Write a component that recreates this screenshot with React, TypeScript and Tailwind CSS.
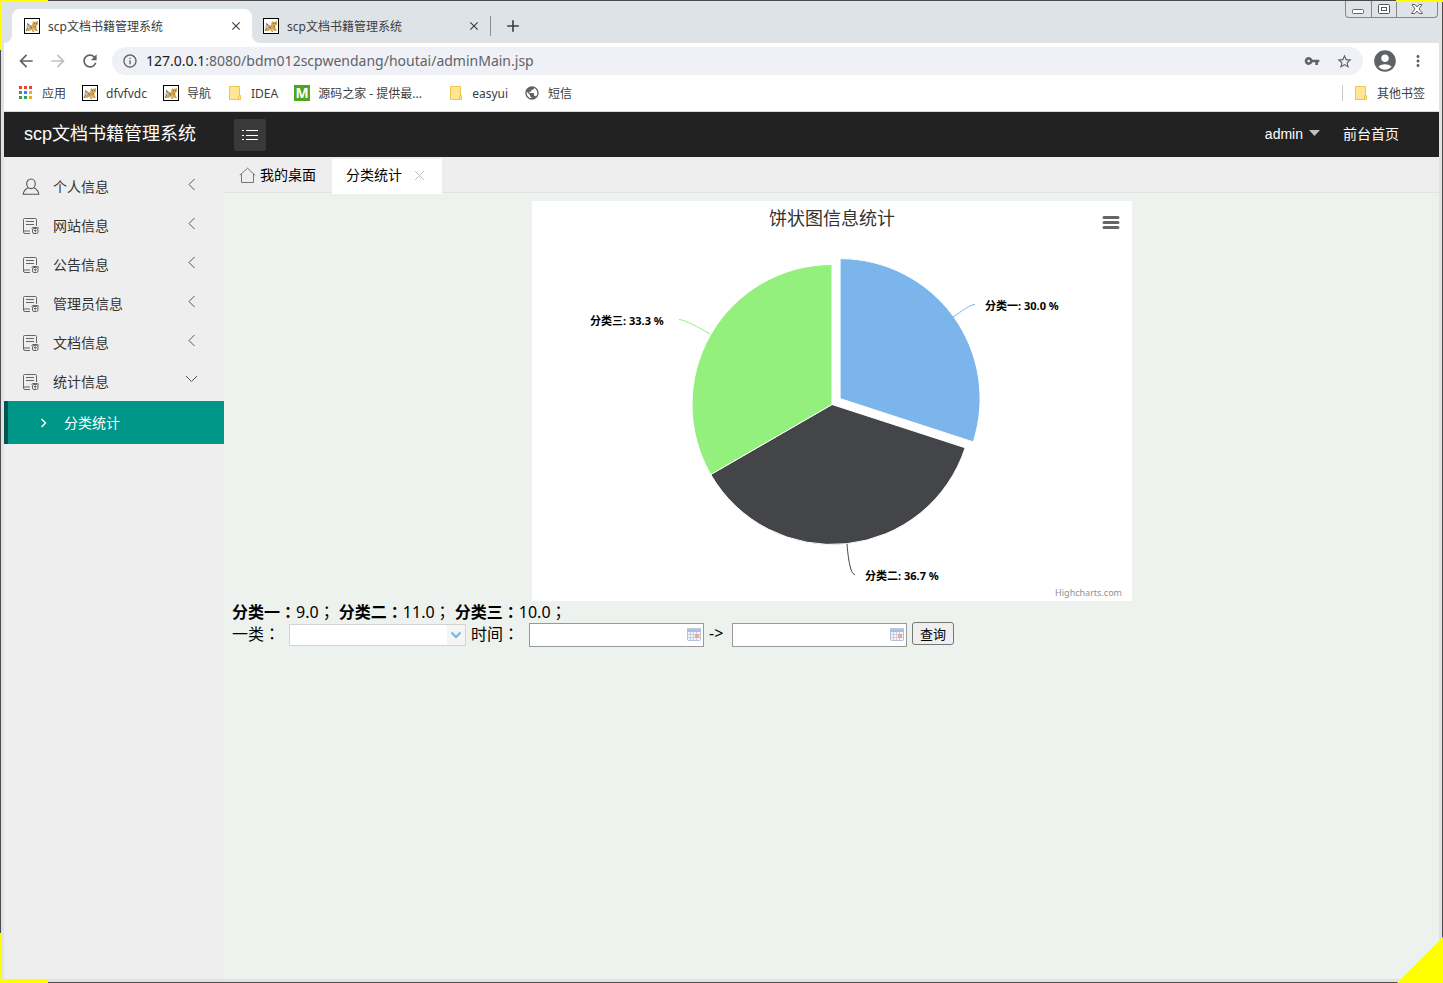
import React, { useState } from "react";
import {
  MdAccountCircle,
  MdAdd,
  MdArrowBack,
  MdArrowForward,
  MdClose,
  MdInfoOutline,
  MdMoreVert,
  MdPublic,
  MdRefresh,
  MdStarBorder,
  MdVpnKey,
} from "react-icons/md";

const menu = ["个人信息", "网站信息", "公告信息", "管理员信息", "文档信息", "统计信息"];

const slices = [
  { name: "分类一", value: 9, color: "#7cb5ec", offset: 10 },
  { name: "分类二", value: 11, color: "#434549", offset: 0 },
  { name: "分类三", value: 10, color: "#94f07c", offset: 0 },
];

const CatIcon = () => (
  <svg width="16" height="16" viewBox="0 0 16 16" className="shrink-0">
    <rect x="0.5" y="0.5" width="15" height="15" fill="#fff" stroke="#000" />
    <path d="M3 5.5 L6 7 L8 7.5 L7 9 L4 9.5 L3 12 L2 13 Z" fill="#b9b4ac" />
    <path d="M5 9 L8 7 L9 3 L10.5 4 L12.5 3.5 L14 3 L14 6.5 L12 8.5 L13 11 L14 13 L11 13 L9.5 11.5 L7 12 L5.5 13 L3 13 Z" fill="#d5a850" />
    <path d="M2 13 L4 10 M3 5.5 L5.5 7 M6 8.5 L8 10 M10.5 8.5 L12 9 M8 12.5 L10 13.5" stroke="#6b6252" strokeWidth="1" fill="none" />
    <path d="M10 5.5 H11 M12 5.5 H13" stroke="#8a6a2c" />
  </svg>
);

const AppsIcon = () => (
  <svg width="16" height="16" viewBox="0 0 16 16" className="shrink-0">
    <path d="M1 1h3v3h-3z M6 1h3v3h-3z M11 1h3v3h-3z" fill="#ea4335" />
    <path d="M1 6h3v3h-3z M1 11h3v3h-3z M6 11h3v3h-3z" fill="#34a05a" />
    <path d="M6 6h3v3h-3z" fill="#2a85f0" />
    <path d="M11 6h3v3h-3z M11 11h3v3h-3z" fill="#f9ab00" />
  </svg>
);

const FolderIcon = () => (
  <svg width="16" height="16" viewBox="0 0 16 16" className="shrink-0">
    <path d="M2.5 1.5 H12.5 V10.5 H13.5 V14.5 H2.5 Z" fill="#ffe694" stroke="#efc44f" />
    <path d="M11.5 14 V11 L13 10.5" fill="none" stroke="#efc44f" />
  </svg>
);

const LetterIcon = () => (
  <span className="w-4 h-4 shrink-0 bg-[#4ea61e] text-white text-[14px] leading-4 font-bold text-center">M</span>
);

const UserIcon = () => (
  <svg width="18" height="18" viewBox="0 0 18 18" fill="none" stroke="#555" strokeWidth="1.1">
    <ellipse cx="9" cy="5.8" rx="4.3" ry="4.8" />
    <path d="M6.3 9.8 C3.5 11 1.6 13 1.2 16.3 H16.8 C16.4 13 14.5 11 11.7 9.8" />
  </svg>
);

const DocIcon = () => (
  <svg width="18" height="18" viewBox="0 0 18 18" fill="none" stroke="#666" strokeWidth="1">
    <path d="M8 16.5 H3 Q1.5 16.5 1.5 15 V2.5 Q1.5 1.5 2.5 1.5 H13.5 Q14.5 1.5 14.5 2.5 V9" />
    <path d="M4 4.5 H12 M4 7.5 H12 M2 14 H8" />
    <rect x="10.5" y="11.5" width="5.5" height="5" rx="1.5" />
    <path d="M9.5 11.5 L11 10.5 H15.5 L17 11.5 M13.3 12.5 V15.5 M12 13.5 H14.6" />
  </svg>
);

const HomeIcon = () => (
  <svg width="17" height="17" viewBox="0 0 17 17" fill="none" stroke="#777" strokeWidth="1">
    <path d="M0.8 8.3 L8.5 1.2 L16.2 8.3 M2.5 7 V15.5 H14.5 V7" />
  </svg>
);

const CalendarIcon = () => (
  <svg width="14" height="13" viewBox="0 0 14 13">
    <rect x="0.5" y="1.5" width="13" height="11" rx="1" fill="#f1f5fc" stroke="#b4c1da" />
    <path d="M0 2 Q0 0 1 0 H13 Q14 0 14 2 V4 H0 Z" fill="#a3bdf0" />
    <path d="M0 1 Q0 0 1 0 H13 Q14 0 14 1 V1.5 H0 Z" fill="#c9c9cc" />
    <path d="M3.5 4 V12 M6.5 4 V12 M9.5 4 V12 M1 6.5 H13 M1 9.5 H13" stroke="#c4d0e4" strokeWidth="1" />
    <rect x="8" y="6" width="4" height="4" fill="#f3a58f" />
  </svg>
);

// full-width punctuation set in the middle of its square
const Mark = ({ children }: { children: string }) => (
  <span className="font-['Noto_Sans_CJK_TC',sans-serif]">{children}</span>
);

const BrowserTab = ({ active }: { active?: boolean }) => (
  <div
    className={`relative flex items-center h-[34px] pr-2 text-[12px] text-[#3c4043] ${
      active ? "w-[240px] pl-3 bg-white rounded-t-lg" : "w-[238px] pl-[11px]"
    }`}
  >
    {active && (
      <>
        <svg className="absolute -left-2 bottom-0" width="8" height="8">
          <path d="M8 0 V8 H0 A8 8 0 0 0 8 0" fill="#fff" />
        </svg>
        <svg className="absolute -right-2 bottom-0" width="8" height="8">
          <path d="M0 0 V8 H8 A8 8 0 0 1 0 0" fill="#fff" />
        </svg>
      </>
    )}
    <CatIcon />
    <span className="ml-2 flex-1 pt-[2px]">scp文档书籍管理系统</span>
    <button aria-label="关闭标签页" className="w-4 h-4 flex items-center justify-center">
      <MdClose size={14} />
    </button>
  </div>
);

const Bookmark = ({ icon, children }: { icon: React.ReactNode; children: string }) => (
  <a href="#" className="flex items-center gap-2 whitespace-nowrap">
    {icon}
    <span className="pt-[2px]">{children}</span>
  </a>
);

const Browser = () => (
  <div className="font-['Noto_Sans','Noto_Sans_CJK_SC',sans-serif]">
    {/* TAB STRIP */}
    <div className="flex h-[42px] items-end pl-2 pr-px">
      <BrowserTab active />
      <BrowserTab />
      <div className="h-[34px] flex items-center">
        <span className="w-px h-5 bg-[#8a8d91]"></span>
        <button aria-label="新标签页" className="ml-3 text-[#3c4043]">
          <MdAdd size={20} />
        </button>
      </div>
      <div className="ml-auto self-start flex h-[17px] border border-t-0 border-[#84878c] rounded-b-[4px]">
        <button aria-label="最小化" className="w-[25px] flex items-center justify-center">
          <svg width="13" height="11" fill="#fff" stroke="#666">
            <rect x="0.5" y="5.5" width="11" height="4" rx="1" />
          </svg>
        </button>
        <button aria-label="最大化" className="w-[26px] flex items-center justify-center border-x border-[#84878c]">
          <svg width="13" height="11" fill="#fff" stroke="#555">
            <rect x="0.5" y="0.5" width="11" height="9" rx="1" />
            <rect x="3.5" y="3.5" width="5" height="3" />
          </svg>
        </button>
        <button aria-label="关闭" className="w-[40px] flex items-center justify-center">
          <svg width="13" height="11" fill="#fff" stroke="#666">
            <path d="M1 0.5 H4 L6 3 L8 0.5 H11 L8 5 L11.5 9.5 H8 L6 7 L4 9.5 H0.5 L4 5 Z" />
          </svg>
        </button>
      </div>
    </div>

    {/* ADDRESS BAR */}
    <div className="flex items-center h-9 bg-white px-3 text-[#5f6368]">
      <button aria-label="后退" className="w-5"><MdArrowBack size={20} /></button>
      <button aria-label="前进" className="w-5 ml-3 text-[#bdc1c6]"><MdArrowForward size={20} /></button>
      <button aria-label="刷新" className="w-5 ml-3"><MdRefresh size={20} /></button>
      <div className="flex flex-1 items-center h-7 ml-3 pl-[10px] pr-[10px] rounded-full bg-[#eff1f6]">
        <MdInfoOutline size={16} className="shrink-0" />
        <a href="#" className="ml-2 flex-1 text-[14px] leading-7">
          <span className="text-[#202124]">127.0.0.1</span>
          :8080/bdm012scpwendang/houtai/adminMain.jsp
        </a>
        <button aria-label="密码"><MdVpnKey size={16} /></button>
        <button aria-label="收藏" className="ml-4"><MdStarBorder size={17} /></button>
      </div>
      <button aria-label="用户" className="ml-[9px]"><MdAccountCircle size={26} /></button>
      <button aria-label="菜单" className="ml-[11px]"><MdMoreVert size={18} /></button>
    </div>

    {/* BOOKMARKS */}
    <div className="flex items-center gap-4 h-[33px] pb-1 bg-white border-b border-[#d8dbdf] px-[14px] text-[12px] text-[#3c4043]">
      <Bookmark icon={<AppsIcon />}>应用</Bookmark>
      <Bookmark icon={<CatIcon />}>dfvfvdc</Bookmark>
      <Bookmark icon={<CatIcon />}>导航</Bookmark>
      <Bookmark icon={<FolderIcon />}>IDEA</Bookmark>
      <div className="w-[138px]">
        <Bookmark icon={<LetterIcon />}>源码之家 - 提供最...</Bookmark>
      </div>
      <Bookmark icon={<FolderIcon />}>easyui</Bookmark>
      <Bookmark icon={<MdPublic size={16} className="text-[#5f6368]" />}>短信</Bookmark>
      <div className="ml-auto flex items-center gap-[10px]">
        <span className="w-px h-4 bg-[#c8cacd]"></span>
        <Bookmark icon={<FolderIcon />}>其他书签</Bookmark>
      </div>
    </div>
  </div>
);

const Sidebar = () => {
  const [open, setOpen] = useState("统计信息");

  return (
    <nav className="w-[220px] shrink-0 pt-[10px] bg-[#eee] text-[14px] text-[#333]">
      {menu.map((item) => (
        <div key={item}>
          <button
            onClick={() => setOpen(open === item ? "" : item)}
            className="flex items-center w-full h-[39px] pl-[18px] pr-[26px] text-left"
          >
            {item === "个人信息" ? <UserIcon /> : <DocIcon />}
            <span className="ml-[13px] pt-[2px] flex-1">{item}</span>
            <svg width="13" height="18" fill="none" stroke="#555" strokeWidth="1">
              {open === item ? <path d="M1 3 L6.5 8.5 L12 3" /> : <path d="M9.5 1 L4 6.5 L9.5 12" />}
            </svg>
          </button>
          {open === item && item === "统计信息" && (
            <a
              href="#"
              className="flex items-center h-[43px] pl-7 bg-[#009688] border-l-4 border-[#00564e] text-white"
            >
              <svg width="16" height="16" fill="none" stroke="#fff" strokeWidth="1.4">
                <path d="M5.5 4 L9.5 8 L5.5 12" />
              </svg>
              <span className="ml-3 pt-[2px]">分类统计</span>
            </a>
          )}
        </div>
      ))}
    </nav>
  );
};

const point = (cx: number, cy: number, angle: number) =>
  `${cx + 140 * Math.sin(angle)} ${cy - 140 * Math.cos(angle)}`;

const PieChart = () => {
  const total = slices.reduce((sum, s) => sum + s.value, 0);
  let angle = 0;

  const paths = slices.map((s) => {
    const from = angle;
    const to = from + (s.value / total) * Math.PI * 2;
    const mid = (from + to) / 2;
    const cx = 300 + s.offset * Math.sin(mid);
    const cy = 203.5 - s.offset * Math.cos(mid);
    angle = to;
    return (
      <path
        key={s.name}
        d={`M${cx} ${cy} L${point(cx, cy, from)} A140 140 0 0 1 ${point(cx, cy, to)} Z`}
        fill={s.color}
        stroke="#fff"
      />
    );
  });

  return (
    <div className="relative w-[600px] mx-auto bg-white">
      <svg width="600" height="400" viewBox="0 0 600 400" className="block">
        <text x="300" y="24" textAnchor="middle" fontSize="18" fill="#333">饼状图信息统计</text>
        {paths}
        <g fill="none">
          <path d="M443 103.5 C438 103.5 430 110 421 116" stroke="#7cb5ec" />
          <path d="M147 118.5 C152 118.5 168 127 178 133" stroke="#94f07c" />
          <path d="M323 373.5 C318 373.5 316 355 315 343" stroke="#434549" />
        </g>
        <g fontSize="11" fontWeight="bold" fill="#000">
          <text x="453" y="109">分类一: 30.0 %</text>
          <text x="58" y="124">分类三: 33.3 %</text>
          <text x="333" y="379">分类二: 36.7 %</text>
        </g>
        <text x="590" y="395" textAnchor="end" fontSize="9" fill="#909090">Highcharts.com</text>
      </svg>
      <button aria-label="图表菜单" className="absolute top-[14px] right-3">
        <svg width="18" height="15" stroke="#666" strokeWidth="3" strokeLinecap="round">
          <path d="M2 2.5 H16 M2 7.5 H16 M2 12.5 H16" />
        </svg>
      </button>
    </div>
  );
};

const DateInput = ({ label }: { label: string }) => (
  <div className="relative">
    <input
      id={label}
      aria-label={label}
      className="block w-[175px] h-6 pl-1 pr-5 text-[13px] bg-white border border-[#999]"
    />
    <span className="absolute right-[3px] top-[5px]">
      <CalendarIcon />
    </span>
  </div>
);

const Main = () => (
  <main className="flex-1 bg-[#edf2ee] text-black">
    {/* PAGE TABS */}
    <div className="flex items-start h-9 pt-[2px] bg-[#efeeee] border-b border-[#e2e4e3] text-[14px]">
      <a href="#" className="flex items-center h-8 w-[108px] pl-[15px] gap-1">
        <HomeIcon />
        我的桌面
      </a>
      <div className="flex items-center h-[35px] pb-[3px] w-[110px] shrink-0 pl-[14px] bg-white">
        分类统计
        <button aria-label="关闭" className="ml-3">
          <svg width="11" height="11" stroke="#c2c2c2" className="block">
            <path d="M1 1 L10 10 M10 1 L1 10" />
          </svg>
        </button>
      </div>
    </div>

    {/* CHART + FILTER */}
    <div className="p-2 font-['Noto_Sans','Noto_Sans_CJK_SC',sans-serif]">
      <PieChart />
      <p className="text-[16px] leading-[20px]">
        {slices.map((s) => (
          <React.Fragment key={s.name}>
            <b>{s.name}<Mark>：</Mark></b>
            {s.value.toFixed(1)}
            <Mark>；</Mark>{" "}
          </React.Fragment>
        ))}
      </p>
      <form className="flex items-start gap-[5px] text-[16px] leading-[22px]" onSubmit={(e) => e.preventDefault()}>
        <label htmlFor="category" className="pr-1">一类<Mark>：</Mark></label>
        <div className="relative mt-[2px]">
          <select id="category" className="block appearance-none w-[177px] h-[22px] px-1 text-[12px] bg-white border border-[#d3d3d3]"></select>
          <span className="absolute right-px top-px w-[18px] h-5 flex items-center justify-center bg-[#f5f5f5] pointer-events-none">
            <svg width="12" height="8" fill="none" stroke="#6fb7e9" strokeWidth="2">
              <path d="M1.5 1.5 L6 6 L10.5 1.5" />
            </svg>
          </span>
        </div>
        <label htmlFor="开始时间" className="pr-[5px]">时间<Mark>：</Mark></label>
        <div className="mt-px"><DateInput label="开始时间" /></div>
        <span className="w-[18px]">-&gt;</span>
        <div className="mt-px"><DateInput label="结束时间" /></div>
        <button className="w-[42px] h-[23px] text-[13px] leading-5 bg-[#efefef] border border-[#767676] rounded-[3px]">
          查询
        </button>
      </form>
    </div>
  </main>
);

export default function App() {
  return (
    <div className="relative min-h-screen flex flex-col bg-[#dee3e7] border border-[#4d4a4c] px-[3px] pb-[3px] font-['Liberation_Sans','Noto_Sans_CJK_SC',sans-serif]">
      <Browser />

      <header className="flex items-center h-[45px] pl-5 pr-10 bg-[#222] text-white text-[14px]">
        <h1 className="w-[210px] text-[18px]">scp文档书籍管理系统</h1>
        <button aria-label="收起菜单" className="w-8 h-8 flex items-center justify-center bg-[#393939] rounded-[2px]">
          <svg width="18" height="12" stroke="#fff">
            <path d="M1 1.5 H3 M5 1.5 H17 M1 6.5 H3 M5 6.5 H17 M1 10.5 H3 M5 10.5 H17" />
          </svg>
        </button>
        <a href="#" className="ml-auto flex items-center gap-[6px]">
          admin
          <svg width="11" height="12" fill="#c0c0c0">
            <path d="M0 1 H11 L5.5 7 Z" />
          </svg>
        </a>
        <a href="#" className="ml-[23px]">前台首页</a>
      </header>

      <div className="flex flex-1">
        <Sidebar />
        <Main />
      </div>

      {/* capture frame corners */}
      <div className="pointer-events-none">
        <span className="absolute -top-px -left-px w-12 h-[2px] bg-[#ff0]"></span>
        <span className="absolute -top-px -left-px w-[2px] h-[50px] bg-[#ff0]"></span>
        <span className="absolute -top-px -right-px w-[47px] h-[2px] bg-[#ff0]"></span>
        <span className="absolute -bottom-px -left-px w-12 h-[3px] bg-[#ff0]"></span>
        <span className="absolute -bottom-px -left-px w-[2px] h-[50px] bg-[#ff0]"></span>
        <svg className="absolute -bottom-px -right-px" width="46" height="46">
          <path d="M46 0 V46 H0 Z" fill="#ff0" />
        </svg>
      </div>
    </div>
  );
}
